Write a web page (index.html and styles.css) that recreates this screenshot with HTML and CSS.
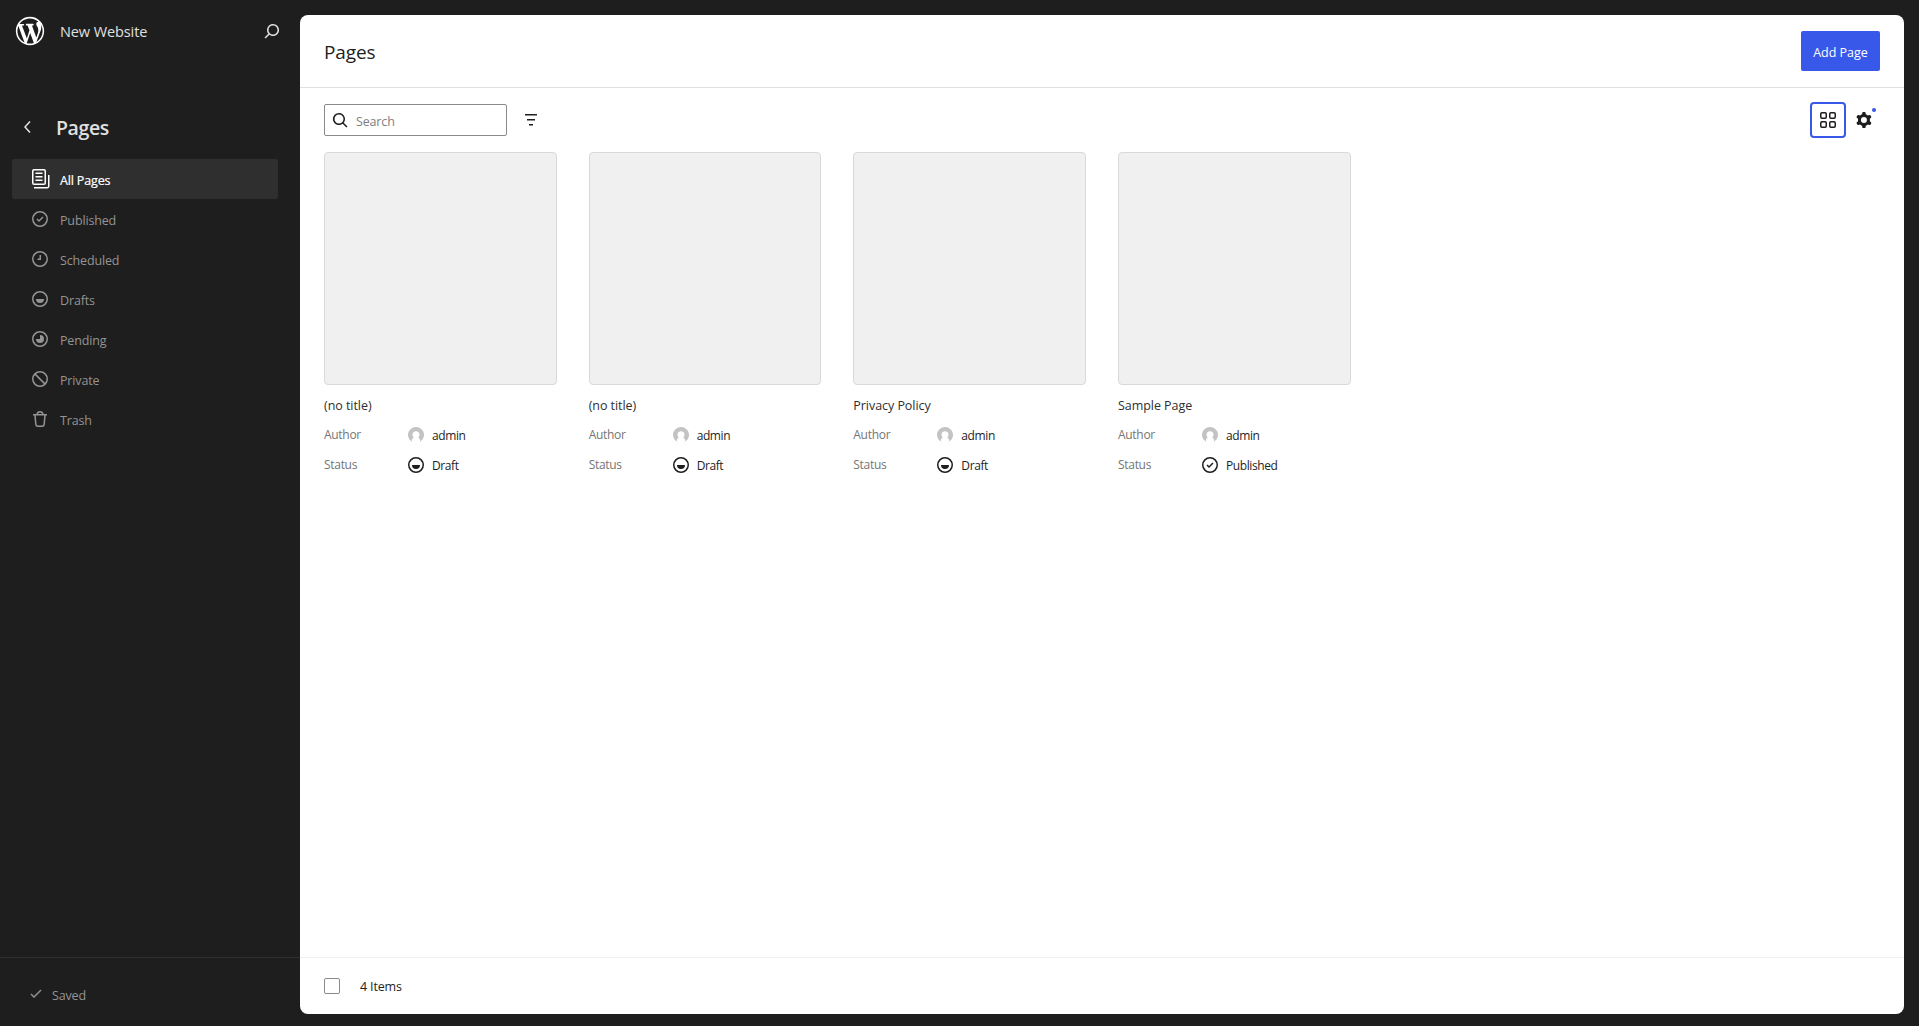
FILE: index.html
```
<!DOCTYPE html>
<html lang="en">
<head>
  <meta charset="UTF-8"/>
  <title>Pages</title>
  <link rel="stylesheet" href="styles.css">
</head>
<body>

<!-- icons -->
<svg class="sprite" width="0" height="0">
  <symbol id="i-search" viewBox="0 0 24 24"><path d="M13 5c-3.3 0-6 2.7-6 6 0 1.4.5 2.7 1.3 3.7l-3.8 3.8 1.1 1.1 3.8-3.8c1 .8 2.3 1.3 3.7 1.3 3.3 0 6-2.7 6-6S16.3 5 13 5zm0 10.5c-2.5 0-4.5-2-4.5-4.5s2-4.5 4.5-4.5 4.5 2 4.5 4.5-2 4.5-4.5 4.5z"/></symbol>
  <symbol id="i-published" viewBox="0 0 24 24"><path fill-rule="evenodd" d="M12 18.5a6.5 6.5 0 1 1 0-13 6.5 6.5 0 0 1 0 13ZM4 12a8 8 0 1 1 16 0 8 8 0 0 1-16 0Zm11.53-1.47-1.06-1.06L11 12.94l-1.47-1.47-1.06 1.06L11 15.06l4.53-4.53Z"/></symbol>
  <symbol id="i-scheduled" viewBox="0 0 24 24"><path fill-rule="evenodd" d="M12 18.5a6.5 6.5 0 1 1 0-13 6.5 6.5 0 0 1 0 13ZM4 12a8 8 0 1 1 16 0 8 8 0 0 1-16 0Zm9 1V8h-1.5v3.5h-2V13H13Z"/></symbol>
  <symbol id="i-drafts" viewBox="0 0 24 24"><path fill-rule="evenodd" d="M12 18.5a6.5 6.5 0 1 1 0-13 6.5 6.5 0 0 1 0 13ZM4 12a8 8 0 1 1 16 0 8 8 0 0 1-16 0Zm8 4a4 4 0 0 0 4-4H8a4 4 0 0 0 4 4Z"/></symbol>
  <symbol id="i-pending" viewBox="0 0 24 24"><path fill-rule="evenodd" d="M12 18.5a6.5 6.5 0 1 1 0-13 6.5 6.5 0 0 1 0 13ZM4 12a8 8 0 1 1 16 0 8 8 0 0 1-16 0Zm8 4a4 4 0 0 1-4-4h4V8a4 4 0 0 1 0 8Z"/></symbol>
  <symbol id="i-avatar" viewBox="0 0 16 16"><path d="M3.800 14.800A8 8 0 1 1 12.200 14.800C12.200 12.800 11.800 11.500 10.200 10.600A3.500 3.600 0 1 0 5.800 10.600C4.200 11.500 3.800 12.800 3.800 14.800Z" fill="#c3c3c3"/></symbol>
</svg>

<div class="layout">
  <aside class="sidebar">
    <div class="site-hub">
      <svg class="logo" viewBox="-2 -2 24 24"><path d="M20 10c0-5.51-4.49-10-10-10C4.48 0 0 4.49 0 10c0 5.52 4.48 10 10 10 5.51 0 10-4.48 10-10zM7.78 15.37L4.37 6.22c.55-.02 1.17-.08 1.17-.08.5-.06.44-1.13-.06-1.11 0 0-1.45.11-2.37.11-.18 0-.37 0-.58-.01C4.12 2.69 6.87 1.11 10 1.11c2.33 0 4.45.87 6.05 2.34-.68-.11-1.65.39-1.65 1.58 0 .74.45 1.36.9 2.1.35.61.55 1.36.55 2.46 0 1.49-1.4 5-1.4 5l-3.03-8.37c.54-.02.82-.17.82-.17.5-.05.44-1.25-.06-1.22 0 0-1.44.12-2.38.12-.87 0-2.33-.12-2.33-.12-.5-.03-.56 1.2-.06 1.22l.92.08 1.26 3.41zM17.41 10c.24-.64.74-1.87.43-4.25.7 1.29 1.05 2.71 1.05 4.25 0 3.29-1.73 6.24-4.4 7.78.97-2.59 1.94-5.2 2.92-7.78zM6.1 18.09C3.12 16.65 1.11 13.53 1.11 10c0-1.3.23-2.48.72-3.59C3.25 10.3 4.67 14.2 6.1 18.09zm4.03-6.63l2.58 6.98c-.86.29-1.76.45-2.71.45-.79 0-1.57-.11-2.29-.33.81-2.38 1.62-4.74 2.42-7.1z"/></svg>
      <span class="site-name">New Website</span>
      <svg class="icon"><use href="#i-search"/></svg>
    </div>

    <div class="nav-title">
      <svg class="icon" viewBox="0 0 24 24"><path d="M14.6 7l-1.2-1L8 12l5.4 6 1.200-1-4.600-5z"/></svg>
      <h2>Pages</h2>
    </div>

    <nav class="nav">
      <a class="nav-item active">
        <svg class="icon" viewBox="0 0 24 24"><path d="M14.5 5.500h-7V7h7V5.500ZM7.500 9h7v1.500h-7V9Zm7 3.500h-7V14h7v-1.500Z"/><path fill-rule="evenodd" d="M16 2H6a2 2 0 0 0-2 2v12a2 2 0 0 0 2 2h10a2 2 0 0 0 2-2V4a2 2 0 0 0-2-2ZM6 3.500h10a.5.5 0 0 1 .5.5v12a.5.5 0 0 1-.5.5H6a.5.5 0 0 1-.5-.5V4a.5.5 0 0 1 .5-.5Z"/><path d="M20 8v11c0 .69-.31 1-.999 1H6v1.500h13.001c1.520 0 2.499-.982 2.499-2.500V8H20Z"/></svg>
        <span>All Pages</span>
      </a>
      <a class="nav-item"><svg class="icon"><use href="#i-published"/></svg><span>Published</span></a>
      <a class="nav-item"><svg class="icon"><use href="#i-scheduled"/></svg><span>Scheduled</span></a>
      <a class="nav-item"><svg class="icon"><use href="#i-drafts"/></svg><span>Drafts</span></a>
      <a class="nav-item"><svg class="icon"><use href="#i-pending"/></svg><span>Pending</span></a>
      <a class="nav-item">
        <svg class="icon" viewBox="0 0 24 24"><g fill="none" stroke="currentColor" stroke-width="1.500"><circle cx="12" cy="12" r="7.250"/><path d="M6.900 6.900l10.200 10.200"/></g></svg>
        <span>Private</span>
      </a>
      <a class="nav-item">
        <svg class="icon" viewBox="0 0 24 24"><path fill-rule="evenodd" d="M12 5.500A2.250 2.250 0 0 0 9.878 7h4.244A2.251 2.251 0 0 0 12 5.500ZM12 4a3.751 3.751 0 0 0-3.675 3H5v1.500h1.270l.818 8.997a2.750 2.750 0 0 0 2.739 2.501h4.347a2.750 2.750 0 0 0 2.738-2.500L17.730 8.500H19V7h-3.325A3.751 3.751 0 0 0 12 4Zm4.224 4.500H7.776l.806 8.861a1.250 1.250 0 0 0 1.245 1.137h4.347a1.250 1.250 0 0 0 1.245-1.137l.805-8.861Z"/></svg>
        <span>Trash</span>
      </a>
    </nav>

    <div class="save-bar">
      <svg class="icon" viewBox="0 0 24 24"><path d="M16.500 7.500 10 13.900l-2.500-2.400-1 1 3.500 3.600 7.500-7.600z"/></svg>
      <span>Saved</span>
    </div>
  </aside>

  <main class="content">
    <header class="page-header">
      <h1>Pages</h1>
      <button class="btn-primary">Add Page</button>
    </header>

    <div class="toolbar">
      <label class="search">
        <svg class="icon flip"><use href="#i-search"/></svg>
        <input type="text" placeholder="Search"/>
      </label>
      <button class="btn-icon">
        <svg class="icon" viewBox="0 0 24 24"><path d="M10 17.500H14V16H10V17.500ZM6 6V7.500H18V6H6ZM8 12.500H16V11H8V12.500Z"/></svg>
      </button>
      <div class="view-actions">
        <button class="btn-icon focused">
          <svg class="icon" viewBox="0 0 24 24"><g fill="none" stroke="currentColor" stroke-width="1.500"><rect x="4.750" y="4.750" width="5.500" height="5.500" rx="1.200"/><rect x="13.750" y="4.750" width="5.500" height="5.500" rx="1.200"/><rect x="4.750" y="13.750" width="5.500" height="5.500" rx="1.200"/><rect x="13.750" y="13.750" width="5.500" height="5.500" rx="1.200"/></g></svg>
        </button>
        <button class="btn-icon modified">
          <svg class="icon" viewBox="0 0 24 24"><path fill-rule="evenodd" d="M10.289 4.836A1 1 0 0111.275 4h1.306a1 1 0 01.987.836l.244 1.466c.787.26 1.503.679 2.108 1.218l1.393-.522a1 1 0 011.216.437l.653 1.130a1 1 0 01-.23 1.273l-1.148.944a6.025 6.025 0 010 2.435l1.149.946a1 1 0 01.23 1.272l-.653 1.130a1 1 0 01-1.216.437l-1.394-.522c-.605.54-1.320.958-2.108 1.218l-.244 1.466a1 1 0 01-.987.836h-1.306a1 1 0 01-.986-.836l-.244-1.466a5.995 5.995 0 01-2.108-1.218l-1.394.522a1 1 0 01-1.217-.436l-.653-1.131a1 1 0 01.23-1.272l1.149-.946a6.026 6.026 0 010-2.435l-1.148-.944a1 1 0 01-.23-1.272l.653-1.131a1 1 0 011.217-.437l1.393.522a5.994 5.994 0 012.108-1.218l.244-1.466zM14.929 12a3 3 0 11-6 0 3 3 0 016 0z"/></svg>
        </button>
      </div>
    </div>

    <div class="grid">
      <div class="card">
        <div class="thumb"></div>
        <div class="card-title">(no title)</div>
        <div class="field"><span class="name">Author</span><svg class="avatar"><use href="#i-avatar"/></svg><span class="value">admin</span></div>
        <div class="field"><span class="name">Status</span><svg class="icon"><use href="#i-drafts"/></svg><span class="value">Draft</span></div>
      </div>
      <div class="card">
        <div class="thumb"></div>
        <div class="card-title">(no title)</div>
        <div class="field"><span class="name">Author</span><svg class="avatar"><use href="#i-avatar"/></svg><span class="value">admin</span></div>
        <div class="field"><span class="name">Status</span><svg class="icon"><use href="#i-drafts"/></svg><span class="value">Draft</span></div>
      </div>
      <div class="card">
        <div class="thumb"></div>
        <div class="card-title">Privacy Policy</div>
        <div class="field"><span class="name">Author</span><svg class="avatar"><use href="#i-avatar"/></svg><span class="value">admin</span></div>
        <div class="field"><span class="name">Status</span><svg class="icon"><use href="#i-drafts"/></svg><span class="value">Draft</span></div>
      </div>
      <div class="card">
        <div class="thumb"></div>
        <div class="card-title">Sample Page</div>
        <div class="field"><span class="name">Author</span><svg class="avatar"><use href="#i-avatar"/></svg><span class="value">admin</span></div>
        <div class="field"><span class="name">Status</span><svg class="icon"><use href="#i-published"/></svg><span class="value">Published</span></div>
      </div>
    </div>

    <footer class="page-footer">
      <input type="checkbox" class="checkbox"/>
      <span>4 Items</span>
    </footer>
  </main>
</div>

</body>
</html>
```

FILE: styles.css
```
* {
  box-sizing: border-box;
}
body {
  margin: 0;
  font-family: "Segoe UI", "Open Sans", "Noto Sans", sans-serif;
  font-size: 12.5px;
  line-height: 20px;
  letter-spacing: -0.15px;
  color: #1e1e1e;
  background: #1e1e1e;
}
h1, h2 {
  margin: 0;
}
button {
  border: none;
  padding: 0;
  background: none;
  color: inherit;
  font: inherit;
  letter-spacing: inherit;
}
.sprite {
  position: absolute;
}
.icon {
  width: 24px;
  height: 24px;
  flex-shrink: 0;
  fill: currentColor;
}
.flip {
  transform: scaleX(-1);
}
.layout {
  display: flex;
  height: 100vh;
}

/* sidebar */
.sidebar {
  width: 300px;
  flex-shrink: 0;
  display: flex;
  flex-direction: column;
  color: #949494;
}
.site-hub {
  display: flex;
  align-items: center;
  height: 62px;
  padding: 0 16px 0 13px;
  color: #e0e0e0;
}
.logo {
  width: 34px;
  height: 34px;
  fill: #fff;
}
.site-name {
  flex: 1;
  margin-left: 13px;
  padding-top: 1px;
  font-size: 14.5px;
  letter-spacing: -0.1px;
}
.nav-title {
  display: flex;
  align-items: center;
  gap: 16px;
  margin-top: 45px;
  padding-left: 16px;
  height: 40px;
  color: #e0e0e0;
}
.nav-title h2 {
  padding-top: 2px;
  font-size: 19.5px;
  font-weight: 600;
  letter-spacing: -0.4px;
}
.nav {
  margin: 12px 22px 0 12px;
}
.nav-item {
  display: flex;
  align-items: center;
  gap: 8px;
  height: 40px;
  padding-left: 16px;
  border-radius: 2px;
}
.nav-item span {
  padding-top: 3px;
}
.nav-item.active {
  background: #2f2f2f;
  color: #fff;
}
.nav-item.active span {
  font-weight: 500;
  -webkit-text-stroke: 0.2px #fff;
}
.save-bar {
  display: flex;
  align-items: center;
  gap: 4px;
  margin-top: auto;
  height: 69px;
  padding: 4px 0 0 24px;
  border-top: 1px solid #2f2f2f;
}
.save-bar span {
  padding-top: 4px;
}

/* main area */
.content {
  flex: 1;
  display: flex;
  flex-direction: column;
  margin: 15px 15px 12px 0;
  background: #fff;
  border-radius: 8px;
  overflow: hidden;
}
.page-header {
  display: flex;
  align-items: center;
  justify-content: space-between;
  height: 73px;
  padding: 0 24px;
  border-bottom: 1px solid #e0e0e0;
}
.page-header h1 {
  padding-top: 2px;
  font-size: 19px;
  font-weight: 400;
  letter-spacing: -0.1px;
}
.btn-primary {
  width: 79px;
  height: 40px;
  padding-top: 3px;
  border-radius: 2px;
  background: #3858e9;
  color: #fff;
  letter-spacing: 0;
}
.toolbar {
  display: flex;
  gap: 8px;
  padding: 16px 24px;
}
.search {
  display: flex;
  align-items: center;
  width: 183px;
  height: 32px;
  padding-left: 3px;
  border: 1px solid #8a8a8a;
  border-radius: 2px;
}
.search input {
  width: 140px;
  border: none;
  outline: none;
  background: none;
  padding: 3px 0 0 4px;
  font: inherit;
  letter-spacing: inherit;
}
.search input::placeholder {
  color: #808080;
}
.btn-icon {
  position: relative;
  display: flex;
  align-items: center;
  justify-content: center;
  width: 32px;
  height: 32px;
}
.focused {
  border-radius: 2px;
  box-shadow: 0 0 0 2px #3858e9;
}
.modified::after {
  content: "";
  position: absolute;
  top: 4px;
  right: 4px;
  width: 4px;
  height: 4px;
  border-radius: 50%;
  background: #3858e9;
}
.view-actions {
  display: flex;
  gap: 4px;
  margin-left: auto;
}
.grid {
  flex: 1;
  display: grid;
  grid-template-columns: repeat(6, 1fr);
  gap: 32px;
  align-content: start;
  padding: 0 24px;
}
.thumb {
  aspect-ratio: 1;
  background: #f0f0f0;
  border: 1px solid #d9d9d9;
  border-radius: 4px;
}
.card-title {
  padding: 11px 0 4px;
  color: #2f2f2f;
  letter-spacing: -0.05px;
}
.field {
  display: flex;
  align-items: center;
  height: 30px;
}
.field .name {
  width: 80px;
  color: #757575;
  font-size: 12px;
  letter-spacing: -0.3px;
}
.field .value {
  padding: 2px 0 0 4px;
  font-size: 12px;
  letter-spacing: -0.4px;
}
.avatar {
  width: 16px;
  height: 16px;
  margin: 0 4px;
}
.page-footer {
  display: flex;
  align-items: center;
  gap: 20px;
  height: 57px;
  padding: 0 24px;
  border-top: 1px solid #f0f0f0;
}
.page-footer span {
  padding-top: 2px;
}
.checkbox {
  appearance: none;
  width: 16px;
  height: 16px;
  margin: 0;
  border: 1px solid #8a8a8a;
  border-radius: 2px;
}
```
